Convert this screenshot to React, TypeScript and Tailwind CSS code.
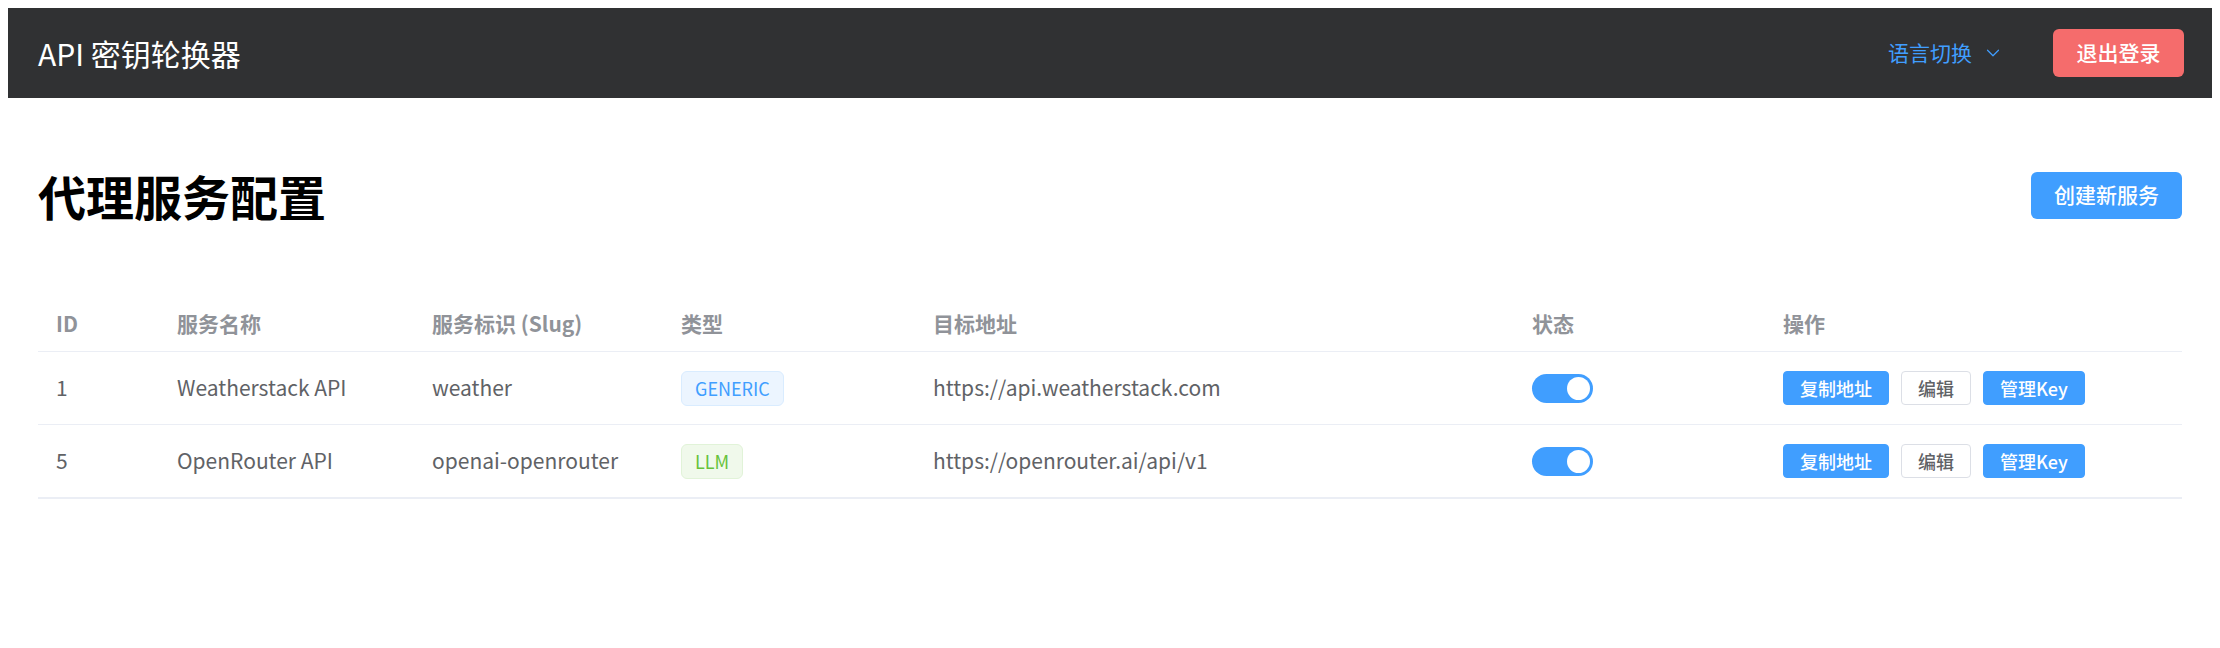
import { ChevronDown } from "lucide-react";

interface Service {
  id: number;
  name: string;
  slug: string;
  type: "GENERIC" | "LLM";
  target: string;
  enabled: boolean;
}

const services: Service[] = [
  {
    id: 1,
    name: "Weatherstack API",
    slug: "weather",
    type: "GENERIC",
    target: "https://api.weatherstack.com",
    enabled: true,
  },
  {
    id: 5,
    name: "OpenRouter API",
    slug: "openai-openrouter",
    type: "LLM",
    target: "https://openrouter.ai/api/v1",
    enabled: true,
  },
];

const cols = "grid grid-cols-[121px_255px_249px_252px_599px_251px_1fr]";

function TypeTag({ type }: { type: Service["type"] }) {
  const tone =
    type === "LLM"
      ? "border-[#e1f3d8] bg-[#f0f9eb] text-[#67c23a]"
      : "border-[#d9ecff] bg-[#ecf5ff] text-[#409eff]";
  return (
    <span
      className={`inline-flex h-[35px] items-center rounded-[6px] border px-[13px] text-[18px] ${tone}`}
    >
      {type}
    </span>
  );
}

function Switch({ on }: { on: boolean }) {
  return (
    <span
      className={`flex h-[29px] w-[61px] items-center rounded-full px-[3px] ${
        on ? "justify-end bg-[#409eff]" : "justify-start bg-[#dcdfe6]"
      }`}
    >
      <span className="h-[23px] w-[23px] rounded-full bg-white" />
    </span>
  );
}

function SmallButton({ label, plain }: { label: string; plain?: boolean }) {
  return (
    <button
      className={
        plain
          ? "h-[34px] rounded-[4px] border border-[#dcdfe6] bg-white px-[16px] text-[18px] font-medium text-[#606266]"
          : "h-[34px] rounded-[4px] border border-[#409eff] bg-[#409eff] px-[16px] text-[18px] font-medium text-white"
      }
    >
      {label}
    </button>
  );
}

export default function App() {
  return (
    <div
      className="min-h-screen bg-white p-2"
      style={{ fontFamily: '"Noto Sans CJK SC", "Noto Sans", sans-serif' }}
    >
      <header className="flex h-[90px] items-center justify-between bg-[#303133] pr-[28px] pl-[30px]">
        <h1 className="text-[30px] font-normal text-white">API 密钥轮换器</h1>
        <div className="flex items-center">
          <button className="flex items-center gap-[10px] text-[21px] text-[#409eff]">
            语言切换
            <ChevronDown size={22} strokeWidth={1.3} />
          </button>
          <button className="ml-[49px] h-[48px] w-[131px] rounded-[6px] bg-[#f56c6c] text-[21px] font-medium text-white">
            退出登录
          </button>
        </div>
      </header>

      <main className="px-[30px]">
        <div className="mt-[73px] flex items-center justify-between">
          <h2 className="text-[48px] leading-none font-bold text-black">代理服务配置</h2>
          <button className="h-[47px] w-[151px] rounded-[6px] bg-[#409eff] text-[21px] font-medium text-white">
            创建新服务
          </button>
        </div>

        <div className="mt-[77px] border-b border-[#ebeef5] text-[21px]">
          <div className={`${cols} h-[56px] items-center border-b border-[#ebeef5] font-bold text-[#909399]`}>
            <div className="px-[18px]">ID</div>
            <div className="px-[18px]">服务名称</div>
            <div className="px-[18px]">服务标识 (Slug)</div>
            <div className="px-[18px]">类型</div>
            <div className="px-[18px]">目标地址</div>
            <div className="px-[18px]">状态</div>
            <div className="px-[18px]">操作</div>
          </div>
          {services.map((s) => (
            <div
              key={s.id}
              className={`${cols} h-[73px] items-center border-b border-[#ebeef5] text-[#606266]`}
            >
              <div className="px-[18px]">{s.id}</div>
              <div className="px-[18px]">{s.name}</div>
              <div className="px-[18px]">{s.slug}</div>
              <div className="px-[18px]">
                <TypeTag type={s.type} />
              </div>
              <div className="px-[18px]">{s.target}</div>
              <div className="px-[18px]">
                <Switch on={s.enabled} />
              </div>
              <div className="flex items-center gap-3 px-[18px]">
                <SmallButton label="复制地址" />
                <SmallButton label="编辑" plain />
                <SmallButton label="管理Key" />
              </div>
            </div>
          ))}
        </div>
      </main>
    </div>
  );
}
